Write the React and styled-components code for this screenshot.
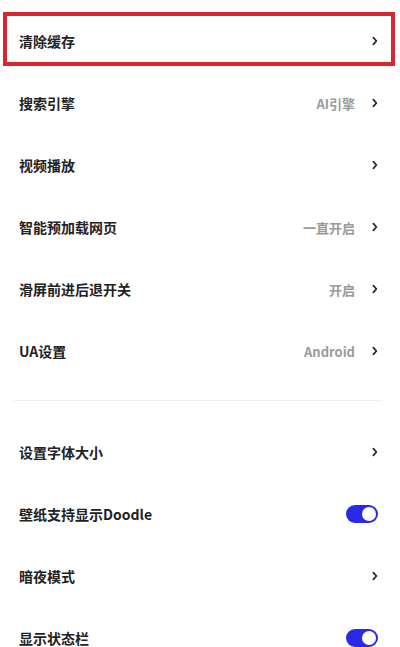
import React from 'react';
import styled, { createGlobalStyle } from 'styled-components';

const GlobalStyle = createGlobalStyle`
	html, body {
		margin: 0;
		padding: 0;
		background: #ffffff;
	}
	body {
		font-family: "Noto Sans CJK SC", "Noto Sans", sans-serif;
		-webkit-font-smoothing: antialiased;
	}
`;

const Page = styled.div`
	width: 400px;
	height: 647px;
	overflow: hidden;
	padding-top: 10px;
	box-sizing: border-box;
	background: #fff;
`;

const Group = styled.div`
	display: flex;
	flex-direction: column;
`;

const Row = styled.div`
	position: relative;
	display: flex;
	align-items: center;
	height: 62px;
	padding: 0 22px 0 19px;
`;

const Highlight = styled.div`
	position: absolute;
	left: 3px;
	right: 5px;
	top: 2px;
	bottom: 6px;
	border: 4px solid #d9262f;
	pointer-events: none;
`;

const Label = styled.span`
	flex: 1;
	font-size: 14px;
	font-weight: 600;
	color: #222;
`;

const Value = styled.span`
	font-size: 13px;
	font-weight: 600;
	color: #9b9b9b;
	margin-right: 17px;
`;

const Divider = styled.div`
	height: 1px;
	background: #f0f0f0;
	margin: 18px 18px 20px 14px;
`;

const Switch = styled.div`
	width: 32px;
	height: 18px;
	border-radius: 9px;
	background: ${p => (p.on ? '#2a2ae6' : '#d0d0d0')};
	display: flex;
	align-items: center;
	justify-content: ${p => (p.on ? 'flex-end' : 'flex-start')};
	padding: 0 2px;
	box-sizing: border-box;
`;

const Knob = styled.div`
	width: 14px;
	height: 14px;
	border-radius: 50%;
	background: #fff;
`;

const Chevron = () => (
	<svg width="6" height="10" viewBox="0 0 6 10">
		<polyline
			points="1.4,1.6 4.4,5 1.4,8.4"
			fill="none"
			stroke="#2a2a2a"
			strokeWidth="1.8"
			strokeLinecap="round"
			strokeLinejoin="round"
		/>
	</svg>
);

const top = [
	{ label: '清除缓存', highlight: true },
	{ label: '搜索引擎', value: 'AI引擎' },
	{ label: '视频播放' },
	{ label: '智能预加载网页', value: '一直开启' },
	{ label: '滑屏前进后退开关', value: '开启' },
	{ label: 'UA设置', value: 'Android' }
];

const bottom = [
	{ label: '设置字体大小' },
	{ label: '壁纸支持显示Doodle', toggle: true },
	{ label: '暗夜模式' },
	{ label: '显示状态栏', toggle: true }
];

const Item = ({ label, value, toggle, highlight }) => (
	<Row>
		<Label>{label}</Label>
		{value && <Value>{value}</Value>}
		{toggle ? (
			<Switch on={1}>
				<Knob />
			</Switch>
		) : (
			<Chevron />
		)}
		{highlight && <Highlight />}
	</Row>
);

export default () => (
	<Page>
		<GlobalStyle />
		<Group>
			{top.map(item => (
				<Item key={item.label} {...item} />
			))}
		</Group>
		<Divider />
		<Group>
			{bottom.map(item => (
				<Item key={item.label} {...item} />
			))}
		</Group>
	</Page>
);
